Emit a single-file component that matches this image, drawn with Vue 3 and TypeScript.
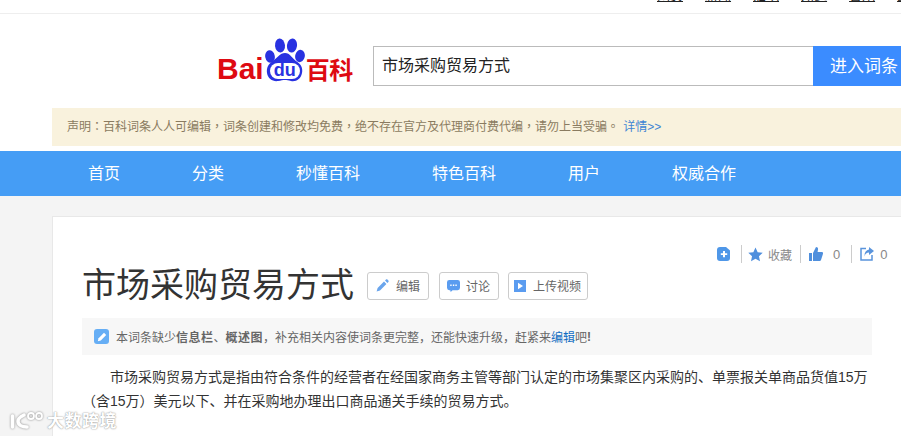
<template>
  <div class="page">
    <div class="top-links">
      <a v-for="link in topLinks" :key="link">{{ link }}</a>
    </div>

    <div class="search-row">
      <div class="logo">
        <span class="logo-bai">Bai</span>
        <span class="logo-paw">
          <svg viewBox="0 0 40 44" width="40" height="44">
            <g fill="#2932e1">
              <ellipse cx="5" cy="18.500" rx="4.800" ry="6.300" transform="rotate(-10 5 18.500)" />
              <ellipse cx="15" cy="7.500" rx="5" ry="7" transform="rotate(-6 15 7.500)" />
              <ellipse cx="27" cy="7.500" rx="5" ry="7" transform="rotate(8 27 7.500)" />
              <ellipse cx="35" cy="18" rx="4.800" ry="6.200" transform="rotate(12 35 18)" />
              <path d="M20 15c5 0 7 5 11 8 5 3 7 7 6 12-1 6-6 9-11 8-3-.6-4-1-6-1s-4 .6-7 1c-5 .8-10-2-11-8-.6-5 1-9 6-12 4-3 7-8 12-8z" />
            </g>
            <rect x="5" y="25" width="30" height="16" rx="8" fill="#fff" />
          </svg>
          <span class="logo-du">du</span>
        </span>
        <span class="logo-bk">百科</span>
      </div>
      <div class="search-box">市场采购贸易方式</div>
      <button type="button" class="search-btn">进入词条</button>
    </div>

    <div class="notice">
      声明：百科词条人人可编辑，词条创建和修改均免费，绝不存在官方及代理商付费代编，请勿上当受骗。
      <a class="notice-link">详情&gt;&gt;</a>
    </div>

    <nav class="nav">
      <a v-for="item in navItems" :key="item">{{ item }}</a>
    </nav>

    <main class="content">
      <article class="card">
        <div class="card-tools">
          <svg class="tool-icon" viewBox="0 0 14 14" width="14" height="14">
            <path d="M3 0h6l4 3.500V11a3 3 0 0 1-3 3H3a3 3 0 0 1-3-3V3a3 3 0 0 1 3-3z" fill="#4f97e8" />
            <path d="M6 4h2v2.200h2.200v1.800H8v2.200H6V8H3.800V6.200H6z" fill="#fff" />
          </svg>
          <i class="sep sep-first"></i>
          <svg class="tool-icon" viewBox="0 0 16 16" width="15" height="15">
            <path d="M8 .5l2.300 5 5.400.6-4 3.700 1.100 5.400L8 12.400l-4.800 2.800 1.100-5.400-4-3.700 5.400-.6z" fill="#4f8fdd" />
          </svg>
          <span class="tool-text">收藏</span>
          <i class="sep"></i>
          <svg class="tool-icon" viewBox="0 0 14 14" width="14" height="14">
            <path d="M0 6h3v8H0zM4 6l3-6c1.500 0 2.300 1 2 2.500L8.600 5H13c1 0 1.300 1 1 1.800l-2 6.200c-.2.600-.7 1-1.300 1H4z" fill="#4f8fdd" />
          </svg>
          <span class="tool-count">0</span>
          <i class="sep"></i>
          <svg class="tool-icon" viewBox="0 0 14 14" width="14" height="14">
            <path d="M6 1.500H1v11.500h11V8" fill="none" stroke="#5a94dc" stroke-width="1.500" />
            <path d="M9 0l5 4-5 4V5.600C6.500 5.600 5 7 4.500 9.500 4.300 5.500 6 3 9 2.600z" fill="#5a94dc" />
          </svg>
          <span class="tool-count share">0</span>
        </div>

        <div class="title-row">
          <h1>市场采购贸易方式</h1>
          <button type="button" class="title-btn btn-edit">
            <svg viewBox="0 0 13 13" width="13" height="13">
              <path d="M8 2.600l2.400 2.400L4 11.400 0.600 12.400 1.600 9zM9 1.600l1-1c.4-.4 1-.4 1.400 0l1 1c.4.4.4 1 0 1.400l-1 1z" fill="#6aa5ec" />
            </svg>
            编辑
          </button>
          <button type="button" class="title-btn btn-talk">
            <svg viewBox="0 0 14 14" width="13" height="13">
              <path d="M2.500 1h9A2.500 2.500 0 0 1 14 3.500v6a2.500 2.500 0 0 1-2.500 2.500H6l-2 2-.5-2h-1A2.500 2.500 0 0 1 0 9.500v-6A2.500 2.500 0 0 1 2.500 1z" fill="#5a9cf0" />
              <path d="M3.500 6h1.500v1.500H3.500zM6.300 6h1.500v1.500H6.300zM9 6h1.500v1.500H9z" fill="#fff" />
            </svg>
            讨论
          </button>
          <button type="button" class="title-btn btn-video">
            <svg viewBox="0 0 12 12" width="12" height="12">
              <rect width="12" height="12" fill="#5a9cf0" />
              <path d="M4 2.800l5 3.200-5 3.200z" fill="#fff" />
            </svg>
            上传视频
          </button>
        </div>

        <div class="tip">
          <span class="tip-icon">
            <svg viewBox="0 0 10 10" width="10" height="10">
              <path d="M7 .8l2.200 2.200-5.400 5.400-3 .8.800-3z" fill="#fff" />
            </svg>
          </span>
          本词条缺少<b>信息栏</b>、<b>概述图</b>，补充相关内容使词条更完整，还能快速升级，赶紧来<a>编辑</a>吧<b>!</b>
        </div>

        <p class="para">
          市场采购贸易方式是指由符合条件的经营者在经国家商务主管等部门认定的市场集聚区内采购的、单票报关单商品货值15万（含15万）美元以下、并在采购地办理出口商品通关手续的贸易方式。
        </p>
      </article>
    </main>

    <div class="watermark">
      <svg viewBox="0 0 34 18" width="34" height="18">
        <g fill="none" stroke="#fff" stroke-linecap="round">
          <path d="M3.500 5v11" stroke-width="3.500" />
          <path d="M15 4c-4 2-6 4-6 6 0 4 4 6 9 6" stroke-width="3.500" />
          <circle cx="22" cy="5" r="3" stroke-width="1.800" />
          <circle cx="30" cy="5" r="3" stroke-width="1.800" />
        </g>
      </svg>
      <span>大数跨境</span>
    </div>
  </div>
</template>

<script setup lang="ts">
const topLinks: string[] = ['网页', '新闻', '贴吧', '知道', '音乐', '图片'];
const navItems: string[] = ['首页', '分类', '秒懂百科', '特色百科', '用户', '权威合作'];
</script>

<style>
html,
body {
  margin: 0;
  overflow: hidden;
  background: #fff;
}
</style>

<style scoped>
.page {
  position: relative;
  width: 901px;
  height: 436px;
  overflow: hidden;
  font-family: "Liberation Sans", "Noto Sans CJK SC", sans-serif;
  color: #333;
}

.top-links {
  display: flex;
  gap: 22px;
  height: 24px;
  margin-top: -11px;
  padding-left: 657px;
  border-bottom: 1px solid #eee;
  white-space: nowrap;
  font-size: 13px;
  line-height: 13px;
}

.top-links a {
  color: #222;
  text-decoration: underline;
}

.search-row {
  display: flex;
  height: 40px;
  margin-top: 32px;
  padding-left: 217px;
}

.logo {
  display: flex;
  align-items: flex-end;
  flex: none;
  width: 156px;
  height: 40px;
  color: #de0a12;
  font-weight: 700;
}

.logo-bai {
  margin-bottom: 2px;
  font-size: 30px;
  line-height: 30px;
}

.logo-paw {
  position: relative;
  display: block;
  flex: none;
  width: 40px;
  height: 44px;
  margin: 0 0 4px 1px;
}

.logo-paw svg {
  display: block;
}

.logo-du {
  position: absolute;
  left: 5px;
  top: 23px;
  width: 30px;
  text-align: center;
  color: #2932e1;
  font-size: 18px;
  line-height: 18px;
}

.logo-bk {
  margin: 0 0 3px 1px;
  font-size: 24px;
  line-height: 25px;
  letter-spacing: -0.5px;
  white-space: nowrap;
}

.search-box {
  box-sizing: border-box;
  flex: none;
  width: 440px;
  height: 40px;
  padding-left: 8px;
  border: 1px solid #bbb;
  border-right: 0;
  font-size: 16px;
  line-height: 38px;
  color: #222;
}

.search-btn {
  flex: none;
  width: 104px;
  height: 40px;
  padding: 0 0 3px 17px;
  border: 0;
  background: #3b8cff;
  color: #fff;
  font: inherit;
  font-size: 17px;
  text-align: left;
  white-space: nowrap;
}

.notice {
  box-sizing: border-box;
  width: 849px;
  height: 38px;
  margin: 22px 0 0 52px;
  padding-left: 15px;
  background: #f9f2dd;
  color: #8a7b60;
  font-family: "Liberation Sans", "Noto Sans CJK TC", sans-serif;
  font-size: 12px;
  line-height: 38px;
  white-space: nowrap;
}

.notice-link {
  margin-left: 1px;
  color: #3f85d4;
}

.nav {
  display: flex;
  gap: 72px;
  height: 45px;
  margin-top: 5px;
  padding-left: 88px;
  background: #459df5;
  font-size: 16px;
  line-height: 45px;
}

.nav a {
  color: #fff;
}

.content {
  height: 240px;
  padding: 20px 0 0 52px;
  background: #f4f4f4;
}

.card {
  box-sizing: border-box;
  width: 870px;
  height: 240px;
  padding: 0 0 0 29px;
  background: #fff;
  border: 1px solid #e8e8e8;
}

.card-tools {
  display: flex;
  align-items: center;
  height: 22px;
  margin-top: 26px;
  padding-left: 635px;
  color: #888;
  font-size: 12px;
  white-space: nowrap;
}

.tool-icon {
  flex: none;
}

.sep {
  width: 1px;
  height: 18px;
  margin: 0 8px;
  background: #ccc;
}

.sep-first {
  margin: 0 6px 0 10px;
}

.tool-text {
  margin-left: 5px;
}

.tool-count {
  margin-left: 10px;
  margin-right: 3px;
  font-size: 13px;
}

.tool-count.share {
  margin-left: 6px;
}

.title-row {
  display: flex;
  align-items: center;
  gap: 9px;
  height: 44px;
  margin-top: -2px;
}

h1 {
  margin: 0 4px 0 0;
  color: #333;
  font-size: 34px;
  font-weight: 400;
  line-height: 44px;
  white-space: nowrap;
}

.title-btn {
  display: flex;
  align-items: center;
  box-sizing: border-box;
  height: 28px;
  margin-top: 1px;
  background: #fff;
  border: 1px solid #ccc;
  border-radius: 3px;
  color: #666;
  font: inherit;
  font-size: 12px;
  white-space: nowrap;
}

.btn-edit {
  gap: 7px;
  margin-right: 1px;
  padding: 0 8px;
}

.btn-talk {
  gap: 6px;
  padding: 0 8px 0 7px;
}

.btn-video {
  gap: 7px;
  padding: 0 6px 0 5px;
}

.tip {
  display: flex;
  align-items: center;
  box-sizing: border-box;
  width: 790px;
  height: 37px;
  margin-top: 11px;
  padding-left: 12px;
  background: #f7f7f7;
  color: #666;
  font-size: 12px;
  white-space: nowrap;
}

.tip-icon {
  display: flex;
  align-items: center;
  justify-content: center;
  width: 15px;
  height: 15px;
  margin-right: 7px;
  border-radius: 3px;
  background: #66aef5;
}

.tip b {
  font-weight: 700;
  letter-spacing: 0.5px;
}

.tip a {
  color: #136ec2;
}

.para {
  width: 790px;
  margin: 10px 0 0;
  color: #333;
  font-size: 14px;
  line-height: 24px;
  text-indent: 28px;
}

.watermark {
  position: absolute;
  left: 9px;
  bottom: 4px;
  display: flex;
  align-items: center;
  gap: 4px;
  color: #fff;
  font-size: 17px;
  font-weight: 700;
  letter-spacing: 0.5px;
  text-shadow: 0 0 1px #999, 0 0 2px #aaa;
}

.watermark svg {
  filter: drop-shadow(0 0 1px #888);
}
</style>
